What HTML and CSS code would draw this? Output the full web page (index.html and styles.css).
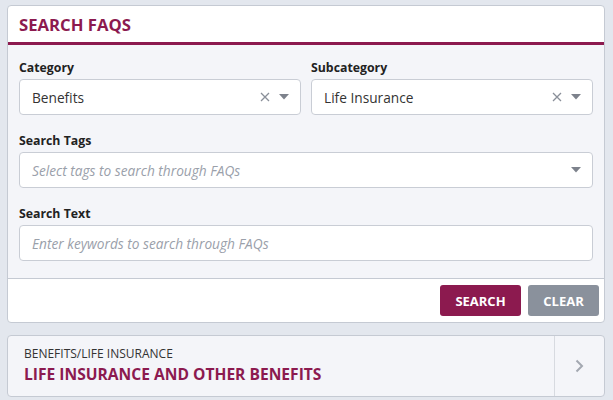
FILE: index.html
```html
<!DOCTYPE html>
<html>
<head>
<meta charset="utf-8">
<link rel="stylesheet" href="styles.css">
</head>
<body>
<div class="page">
  <section class="card search-card">
    <header class="card-head">
      <h1 class="title">SEARCH FAQS</h1>
    </header>
    <div class="card-body">
      <div class="row two">
        <div class="field">
          <label class="label">Category</label>
          <div class="select">
            <span class="value">Benefits</span>
            <span class="icons">
              <svg class="clear-x" width="10" height="10" viewBox="0 0 10 10"><path d="M1 1L9 9M9 1L1 9" stroke="#8a8f99" stroke-width="1.3" fill="none"/></svg>
              <svg class="caret" width="10" height="6" viewBox="0 0 10 6"><path d="M0 0H10L5 5.5Z" fill="#7d828c"/></svg>
            </span>
          </div>
        </div>
        <div class="field">
          <label class="label">Subcategory</label>
          <div class="select">
            <span class="value">Life Insurance</span>
            <span class="icons">
              <svg class="clear-x" width="10" height="10" viewBox="0 0 10 10"><path d="M1 1L9 9M9 1L1 9" stroke="#8a8f99" stroke-width="1.3" fill="none"/></svg>
              <svg class="caret" width="10" height="6" viewBox="0 0 10 6"><path d="M0 0H10L5 5.5Z" fill="#7d828c"/></svg>
            </span>
          </div>
        </div>
      </div>
      <div class="field">
        <label class="label">Search Tags</label>
        <div class="select">
          <span class="placeholder">Select tags to search through FAQs</span>
          <span class="icons">
            <svg class="caret" width="10" height="6" viewBox="0 0 10 6"><path d="M0 0H10L5 5.5Z" fill="#7d828c"/></svg>
          </span>
        </div>
      </div>
      <div class="field">
        <label class="label">Search Text</label>
        <div class="select">
          <span class="placeholder">Enter keywords to search through FAQs</span>
        </div>
      </div>
    </div>
    <footer class="card-foot">
      <button class="btn btn-primary">SEARCH</button>
      <button class="btn btn-gray">CLEAR</button>
    </footer>
  </section>
  <section class="card result-card">
    <div class="result-main">
      <div class="crumb">BENEFITS/LIFE INSURANCE</div>
      <div class="result-title">LIFE INSURANCE AND OTHER BENEFITS</div>
    </div>
    <div class="result-arrow">
      <svg width="9" height="14" viewBox="0 0 9 14"><path d="M1.5 1.5L7 7L1.5 12.5" stroke="#a3a8b1" stroke-width="2" fill="none"/></svg>
    </div>
  </section>
</div>
</body>
</html>
```
FILE: styles.css
```css
* { box-sizing: border-box; }
html, body { margin: 0; padding: 0; }
body {
  background: #e3e7ee;
  font-family: "Open Sans", "Noto Sans", sans-serif;
  color: #222;
}
.page {
  padding: 5px 8px 0 7px;
  display: flex;
  flex-direction: column;
  gap: 12px;
}
.card {
  background: #fff;
  border: 1px solid #c5cad3;
  border-radius: 4px;
  overflow: hidden;
}
.card-head {
  height: 39px;
  border-bottom: 3px solid #8c1a4f;
  display: flex;
  align-items: center;
  padding: 0 11px;
}
.title {
  margin: 0;
  font-size: 16.7px;
  font-weight: 700;
  color: #8c1a4f;
}
.card-body {
  background: #f4f5f9;
  padding: 14px 11px 17px;
  display: flex;
  flex-direction: column;
  gap: 17px;
  border-bottom: 1px solid #c5cad3;
}
.row.two {
  display: grid;
  grid-template-columns: 1fr 1fr;
  gap: 10px;
}
.field { display: flex; flex-direction: column; gap: 2px; }
.label {
  font-size: 12.3px;
  font-weight: 700;
  color: #222;
  line-height: 18px;
}
.select {
  height: 36px;
  background: #fff;
  border: 1px solid #c9cdd5;
  border-radius: 4px;
  display: flex;
  align-items: center;
  padding: 0 11px 0 12px;
}
.value { font-size: 13.7px; color: #333; flex: 1; }
.placeholder { font-size: 13.7px; color: #9aa0aa; font-style: italic; flex: 1; }
.icons { display: flex; align-items: center; gap: 9px; }
.card-foot {
  display: flex;
  justify-content: flex-end;
  gap: 7px;
  padding: 6px 5px 6px;
}
.btn {
  border: none;
  border-radius: 3px;
  height: 31px;
  padding: 0;
  font-family: inherit;
  font-size: 13px;
  font-weight: 700;
  color: #fff;
}
.btn-primary { background: #8c1a4f; width: 81px; }
.btn-gray { background: #8a919c; width: 71px; }
.result-card {
  background: #f4f5f9;
  display: flex;
  height: 62px;
}
.result-main {
  flex: 1;
  padding: 9px 16px;
  display: flex;
  flex-direction: column;
  gap: 1px;
}
.crumb { font-size: 12px; color: #333; }
.result-title { font-size: 15.6px; font-weight: 700; color: #8c1a4f; }
.result-arrow {
  width: 50px;
  border-left: 1px solid #d7dae0;
  display: flex;
  align-items: center;
  justify-content: center;
}
```
